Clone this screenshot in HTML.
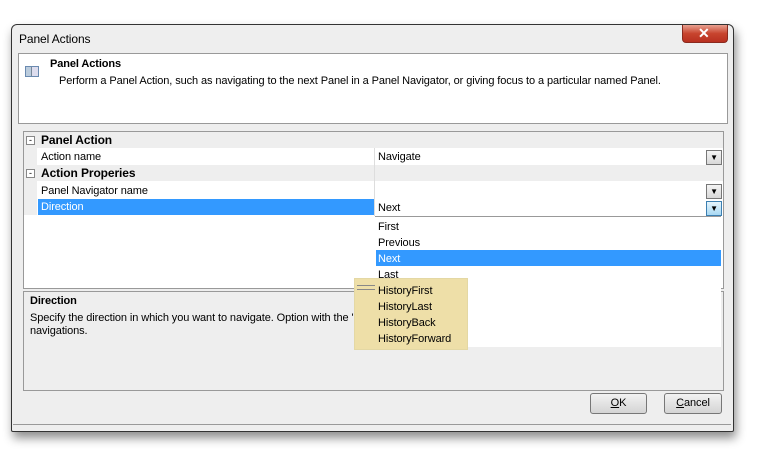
<!DOCTYPE html><html><head><style>
body{margin:0;width:773px;height:460px;background:#fff;position:relative;overflow:hidden;font-family:"Liberation Sans",sans-serif;font-size:11px;color:#000;letter-spacing:-0.1px}
.a{position:absolute}
</style></head><body>
<div class="a" style="left:11px;top:24px;width:721px;height:406px;border:1px solid #333;border-radius:6px 6px 2px 2px;background:#eeeeee;box-shadow:2px 6px 10px rgba(0,0,0,.45)"></div>
<div class="a" style="left:19px;top:32px;font-size:12px">Panel Actions</div>
<div class="a" style="left:682px;top:25px;width:44px;height:17px;border:1px solid #8a2a1e;border-top:none;border-radius:0 0 4px 4px;background:linear-gradient(#e8a090,#c8442e 50%,#b83020)"></div>
<div class="a" style="left:698px;top:25px;color:#fff;font-size:14px;font-weight:bold">✕</div>
<div class="a" style="left:18px;top:53px;width:708px;height:69px;background:#fff;border:1px solid #999"></div>
<div class="a" style="left:25px;top:66px;width:12px;height:9px;border:1px solid #6a8ab0;background:linear-gradient(90deg,#bcd 0 5px,#789 5px 6px,#dde 6px)"></div>
<div class="a" style="left:50px;top:58px;font-weight:bold">Panel Actions</div>
<div class="a" style="left:59px;top:75px">Perform a Panel Action, such as navigating to the next Panel in a Panel Navigator, or giving focus to a particular named Panel.</div>
<div class="a" style="left:23px;top:131px;width:699px;height:156px;background:#fff;border:1px solid #999"></div>
<div class="a" style="left:24px;top:132px;width:699px;height:16px;background:#eee"></div>
<div class="a" style="left:24px;top:165px;width:699px;height:16px;background:#eee"></div>
<div class="a" style="left:24px;top:132px;width:13px;height:83px;background:#eee"></div>
<div class="a" style="left:26px;top:136px;width:7px;height:7px;border:1px solid #888;background:#fff;font-size:9px;line-height:6px;text-align:center">-</div>
<div class="a" style="left:26px;top:169px;width:7px;height:7px;border:1px solid #888;background:#fff;font-size:9px;line-height:6px;text-align:center">-</div>
<div class="a" style="left:41px;top:133px;font-weight:bold;font-size:12px">Panel Action</div>
<div class="a" style="left:41px;top:166px;font-weight:bold;font-size:12px">Action Properies</div>
<div class="a" style="left:41px;top:151px">Action name</div>
<div class="a" style="left:41px;top:185px">Panel Navigator name</div>
<div class="a" style="left:38px;top:199px;width:336px;height:16px;background:#3399ff"></div>
<div class="a" style="left:41px;top:201px;color:#fff">Direction</div>
<div class="a" style="left:374px;top:148px;width:1px;height:68px;background:#ddd"></div>
<div class="a" style="left:378px;top:151px">Navigate</div>
<div class="a" style="left:378px;top:202px">Next</div>
<div class="a" style="left:706px;top:150px;width:14px;height:13px;border:1px solid #777;background:linear-gradient(#f4f4f4,#d8d8d8);font-size:8px;text-align:center;line-height:14px">▼</div>
<div class="a" style="left:706px;top:184px;width:14px;height:13px;border:1px solid #777;background:linear-gradient(#f4f4f4,#d8d8d8);font-size:8px;text-align:center;line-height:14px">▼</div>
<div class="a" style="left:706px;top:201px;width:14px;height:13px;border:1px solid #3c7fb1;background:linear-gradient(#e5f4fc,#a8d8f3);font-size:8px;text-align:center;line-height:14px">▼</div>
<div class="a" style="left:23px;top:291px;width:699px;height:98px;border:1px solid #999;background:#eee"></div>
<div class="a" style="left:30px;top:295px;font-weight:bold">Direction</div>
<div class="a" style="left:30px;top:312px;line-height:13px">Specify the direction in which you want to navigate. Option with the "Histo<br>navigations.</div>
<div class="a" style="left:375px;top:216px;width:346px;height:130px;background:#fff;border-top:1px solid #999"></div>
<div class="a" style="left:376px;top:250px;width:345px;height:16px;background:#3399ff"></div>
<div class="a" style="left:354px;top:278px;width:112px;height:70px;background:#eedfa8;border:1px solid #e4d8a4"></div>
<div class="a" style="left:357px;top:285px;width:18px;height:3px;border-top:1px solid #888;border-bottom:1px solid #888"></div>
<div class="a" style="left:378px;top:219px;line-height:16px">First<br>Previous<br><span style="color:#fff">Next</span><br>Last<br>HistoryFirst<br>HistoryLast<br>HistoryBack<br>HistoryForward</div>
<div class="a" style="left:590px;top:393px;width:55px;height:19px;border:1px solid #777;border-radius:3px;background:linear-gradient(#f2f2f2,#d4d4d4);text-align:center;line-height:19px"><u>O</u>K</div>
<div class="a" style="left:664px;top:393px;width:56px;height:19px;border:1px solid #777;border-radius:3px;background:linear-gradient(#f2f2f2,#d4d4d4);text-align:center;line-height:19px"><u>C</u>ancel</div>
<div class="a" style="left:13px;top:424px;width:718px;height:0;border-top:1px solid #999"></div>
</body></html>
